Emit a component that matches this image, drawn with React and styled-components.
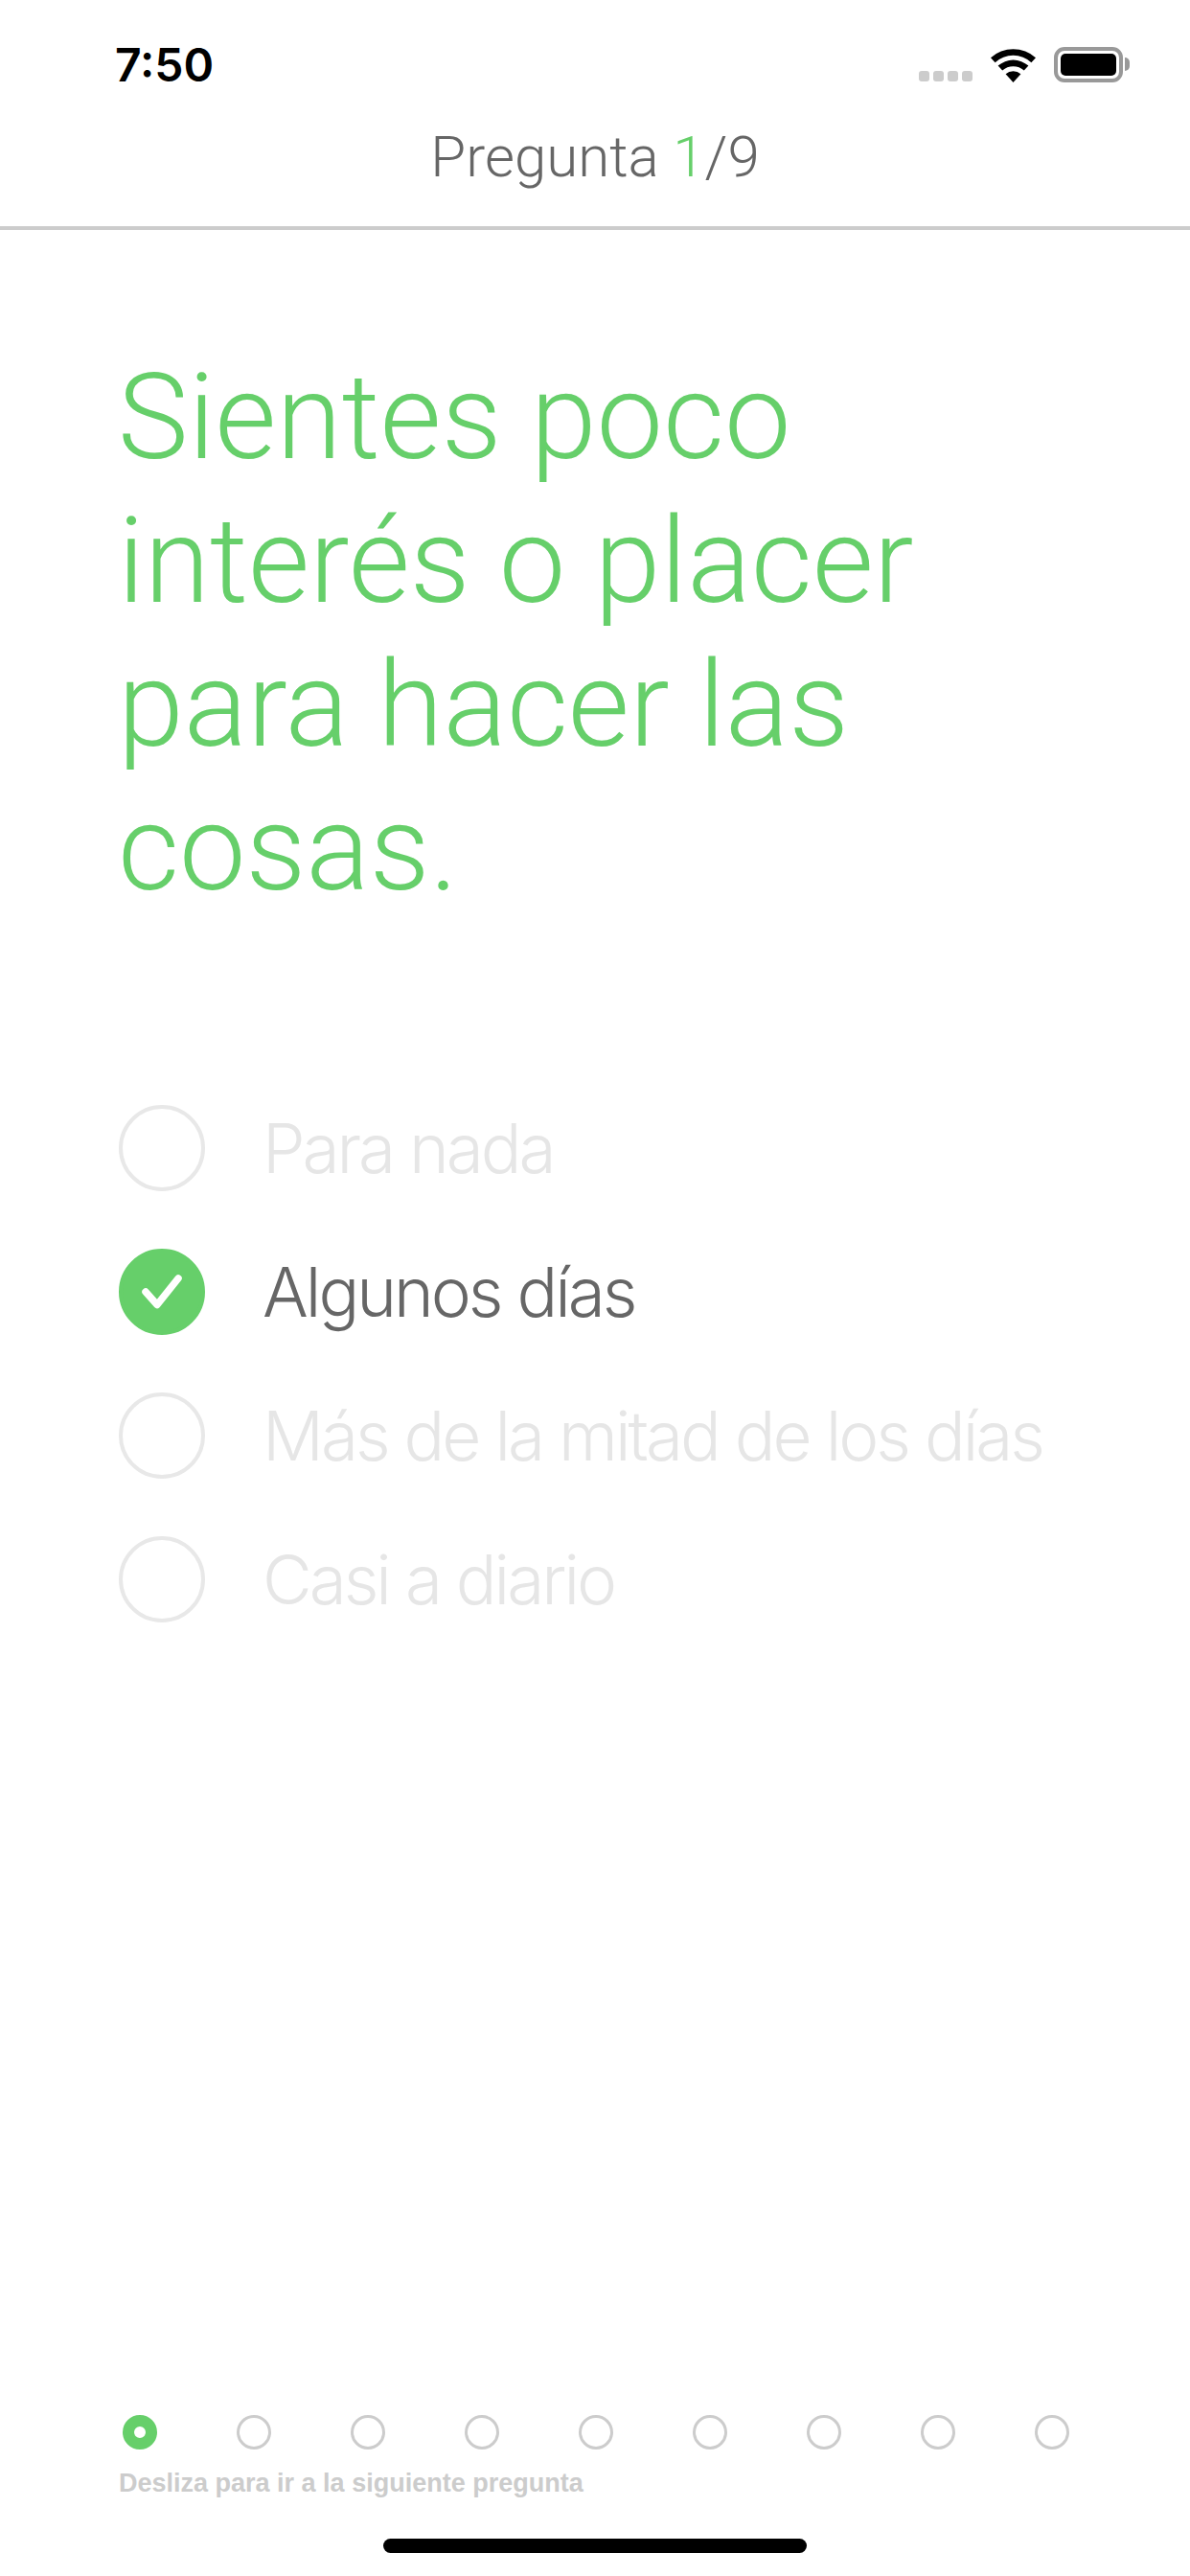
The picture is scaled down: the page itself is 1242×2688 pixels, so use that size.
import styled, { createGlobalStyle } from "styled-components";

const options = [
  { label: "Para nada" },
  { label: "Algunos días", checked: true },
  { label: "Más de la mitad de los días" },
  { label: "Casi a diario" },
];

const steps = [0, 1, 2, 3, 4, 5, 6, 7, 8];

const GlobalStyle = createGlobalStyle`
  html, body {
    margin: 0;
    padding: 0;
    background: #fff;
  }
`;

const App = () => {
  return (
    <Screen>
      <GlobalStyle />
      <StatusBar>
        <Time>7:50</Time>
        <StatusIcons>
          <Signal>
            <SignalDot />
            <SignalDot />
            <SignalDot />
            <SignalDot />
          </Signal>
          <svg width="47" height="36" viewBox="0 0 47 36">
            <path d="M23.5 36 L15.6 27.3 A12 12 0 0 1 31.4 27.3 Z" fill="#000" />
            <path d="M12.2 23.6 L7.6 18.6 A24 24 0 0 1 39.4 18.6 L34.8 23.6 A17 17 0 0 0 12.2 23.6 Z" fill="#000" />
            <path d="M4.6 15.2 L0 10.2 A35 35 0 0 1 47 10.2 L42.4 15.2 A28 28 0 0 0 4.6 15.2 Z" fill="#000" />
          </svg>
          <Battery>
            <BatteryFill />
            <BatteryNub />
          </Battery>
        </StatusIcons>
      </StatusBar>
      <Header>
        Pregunta <Accent>1</Accent>/9
      </Header>
      <Question>Sientes poco interés o placer para hacer las cosas.</Question>
      <OptionList>
        {options.map((option) => (
          <Option key={option.label}>
            <Circle $checked={option.checked}>
              {option.checked && (
                <svg width="42" height="36" viewBox="0 0 42 36">
                  <path
                    d="M4 18 L16 31.5 L38 4"
                    fill="none"
                    stroke="#fff"
                    strokeWidth="7.5"
                    strokeLinecap="round"
                    strokeLinejoin="round"
                  />
                </svg>
              )}
            </Circle>
            <OptionLabel $checked={option.checked}>{option.label}</OptionLabel>
          </Option>
        ))}
      </OptionList>
      <Footer>
        <Steps>
          {steps.map((step) => (
            <Step key={step} $active={step === 0} />
          ))}
        </Steps>
        <Hint>Desliza para ir a la siguiente pregunta</Hint>
      </Footer>
      <HomeBar />
    </Screen>
  );
};

const Screen = styled.div`
  width: 1242px;
  height: 2688px;
  background: #fff;
  display: flex;
  flex-direction: column;
  overflow: hidden;
  font-family: "Inter", "Liberation Sans", sans-serif;
`;

const StatusBar = styled.div`
  height: 100px;
  padding: 46px 63px 0 120px;
  box-sizing: border-box;
  display: flex;
  justify-content: space-between;
  align-items: flex-start;
`;

const Time = styled.div`
  font-size: 48px;
  line-height: 44px;
  font-weight: 600;
  color: #000;
`;

const StatusIcons = styled.div`
  display: flex;
  align-items: flex-end;
  gap: 19px;
  padding-top: 3px;
`;

const Signal = styled.div`
  display: flex;
  gap: 4px;
  margin-bottom: 1px;
`;

const SignalDot = styled.div`
  width: 11px;
  height: 11px;
  border-radius: 3px;
  background: #ccc;
`;

const Battery = styled.div`
  position: relative;
  width: 72px;
  height: 37px;
  box-sizing: border-box;
  border: 4px solid #999;
  border-radius: 11px;
  padding: 3px;
  margin-right: 7px;
`;

const BatteryFill = styled.div`
  height: 100%;
  background: #000;
  border-radius: 5px;
`;

const BatteryNub = styled.div`
  position: absolute;
  right: -11px;
  top: 7px;
  width: 5px;
  height: 14px;
  background: #999;
  border-radius: 0 6px 6px 0;
`;

const Header = styled.div`
  height: 140px;
  box-sizing: border-box;
  border-bottom: 4px solid #ccc;
  text-align: center;
  font-family: "Roboto", "Liberation Sans", sans-serif;
  font-size: 60px;
  font-weight: 300;
  line-height: 64px;
  padding-top: 32px;
  color: #666;
`;

const Accent = styled.span`
  color: #66cf6a;
`;

const Question = styled.h1`
  margin: 0;
  padding: 121px 120px 0 123px;
  font-family: "Roboto", "Liberation Sans", sans-serif;
  font-size: 124px;
  font-weight: 300;
  line-height: 150px;
  color: #66cf6a;
`;

const OptionList = styled.div`
  margin-top: 192px;
  padding-left: 124px;
  display: flex;
  flex-direction: column;
  gap: 60px;
`;

const Option = styled.div`
  display: flex;
  align-items: center;
  gap: 60px;
`;

const Circle = styled.div`
  width: 90px;
  height: 90px;
  box-sizing: border-box;
  border-radius: 50%;
  display: flex;
  align-items: center;
  justify-content: center;
  border: 4px solid ${(p) => (p.$checked ? "#66cf6a" : "#e8e8e8")};
  background: ${(p) => (p.$checked ? "#66cf6a" : "transparent")};
`;

const OptionLabel = styled.div`
  font-size: 71px;
  font-weight: 300;
  letter-spacing: -3px;
  color: ${(p) => (p.$checked ? "#666" : "#e6e6e6")};
`;

const Footer = styled.div`
  margin-top: auto;
  padding-left: 124px;
`;

const Steps = styled.div`
  display: flex;
  gap: 83px;
  padding-left: 4px;
`;

const Step = styled.div`
  width: 36px;
  height: 36px;
  box-sizing: border-box;
  border-radius: 50%;
  border: ${(p) => (p.$active ? "12px solid #66cf6a" : "3.5px solid #ccc")};
`;

const Hint = styled.div`
  margin-top: 18px;
  font-family: "Liberation Sans", Arial, sans-serif;
  font-size: 27px;
  line-height: 34px;
  font-weight: 700;
  color: #ccc;
`;

const HomeBar = styled.div`
  width: 442px;
  height: 15px;
  border-radius: 8px;
  background: #000;
  margin: 41px auto 24px;
  flex-shrink: 0;
`;

export default App;
